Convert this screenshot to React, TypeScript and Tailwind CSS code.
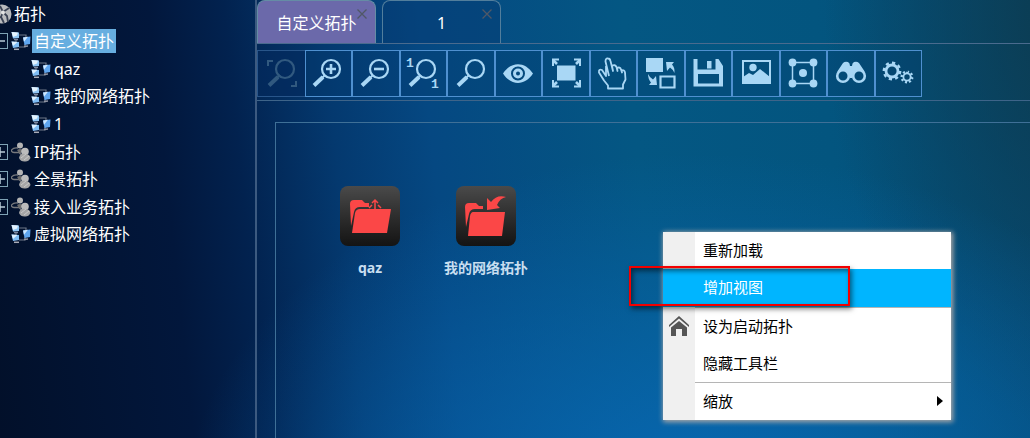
import type { ReactNode } from "react";

function NetIcon() {
  return (
    <svg viewBox="0 0 20 20" className="size-5 shrink-0" aria-hidden="true">
      <path d="M8 4h7v4M5 9v4M8 16h6v-3" fill="none" stroke="#6f7888" strokeWidth="1.200" />
      <path d="M.5 1l7.500 .5v5.500L2 7.500z" fill="#8fc6f6" />
      <path d="M.5 1l6.500 .5-1 3L2 6z" fill="#e4f3ff" />
      <path d="M3 8.500h4" stroke="#7d88a0" strokeWidth="1.500" />
      <path d="M.5 10.500l7.500 .5v5L2 17z" fill="#7fbdf5" />
      <path d="M.5 10.500l6 .4L2 15z" fill="#dff0ff" />
      <path d="M3 18.300h5" stroke="#a9acb8" strokeWidth="1.500" />
      <path d="M12 6.500l7.500-1-.5 7.500-5.500 1z" fill="#5fa6f0" />
      <path d="M12 6.500l5-.7-4 5z" fill="#cfe8ff" />
      <path d="M13 15.500l4-.5" stroke="#9296a5" strokeWidth="1.500" />
    </svg>
  );
}

function GroupIcon() {
  return (
    <svg viewBox="0 0 20 20" className="size-5 shrink-0" aria-hidden="true">
      <path d="M7 6C1 5-2 10 3 10.500h5l3 3" fill="none" stroke="#77797d" strokeWidth="1.300" />
      <circle cx="9" cy="3.500" r="3" fill="#b4b4b4" />
      <path d="M6 8q3-2 6 0l-2 3H8z" fill="#6d6d6d" />
      <circle cx="14" cy="9.500" r="3.800" fill="#bcbcbc" />
      <path d="M8 16q1-5 6-4 5 0 5.500 4-2 4-6 3.500-4 0-5.500-3.500z" fill="#a6a6a6" />
      <path d="M10 16l5-4M13 18l5-4" stroke="#c9c9c9" />
    </svg>
  );
}

function GlobeIcon() {
  return (
    <svg viewBox="0 0 20 20" className="size-5 shrink-0" aria-hidden="true">
      <circle cx="10" cy="10" r="9.500" fill="#b9bbbe" />
      <path d="M8 2l3 6 6-4M11 8l-2 5-8 1M11 8l4 4 1 6M9 13l3 6" fill="none" stroke="#3a4254" strokeWidth="1.800" />
      <circle cx="11" cy="8.500" r="2" fill="#e4e4e4" />
    </svg>
  );
}

function Expander({ open }: { open: boolean }) {
  return (
    <button
      type="button"
      aria-label={open ? "折叠" : "展开"}
      className="grid size-4 shrink-0 place-items-center border border-[#7fa3b5]"
    >
      <svg viewBox="0 0 14 14" className="size-3.5" stroke="#b9cbd8" strokeWidth="1.500" aria-hidden="true">
        <path d={open ? "M2 7h10" : "M2 7h10M7 2v10"} />
      </svg>
    </button>
  );
}

type Node = { label: string; level: number; kind: "net" | "group"; open?: boolean; selected?: boolean };

const tree: Node[] = [
  { label: "自定义拓扑", level: 1, kind: "net", open: true, selected: true },
  { label: "qaz", level: 2, kind: "net" },
  { label: "我的网络拓扑", level: 2, kind: "net" },
  { label: "1", level: 2, kind: "net" },
  { label: "IP拓扑", level: 1, kind: "group", open: false },
  { label: "全景拓扑", level: 1, kind: "group", open: false },
  { label: "接入业务拓扑", level: 1, kind: "group", open: false },
  { label: "虚拟网络拓扑", level: 1, kind: "net" },
];

function Sidebar() {
  return (
    <aside className="w-[257px] shrink-0 overflow-hidden border-r-2 border-[#3c5a80]">
      <ul className="-ml-2 grid h-62 grid-rows-9 text-base leading-6 whitespace-nowrap text-white">
        <li className="flex items-center gap-0.5">
          <GlobeIcon />
          <span>拓扑</span>
        </li>
        {tree.map((n) => (
          <li key={n.label} className={n.level === 2 ? "flex items-center pl-[39px]" : "flex items-center"}>
            {n.level === 1 && (
              <span className="mr-[3px] w-4 shrink-0">{n.open !== undefined && <Expander open={n.open} />}</span>
            )}
            {n.kind === "net" ? <NetIcon /> : <GroupIcon />}
            <span className={n.selected ? "ml-px bg-[#67aee0] px-0.5" : "ml-px px-0.5"}>{n.label}</span>
          </li>
        ))}
      </ul>
    </aside>
  );
}

function Lens({ cx = 19, hx = 2 }: { cx?: number; hx?: number }) {
  return (
    <>
      <circle cx={cx} cy="11" r="9" fill="none" stroke="currentColor" strokeWidth="2.200" />
      <path d={`M${hx} 27.500l9-8.500`} stroke="currentColor" strokeWidth="4" />
      <path d={`M${hx + 8} 20l3-3`} stroke="currentColor" strokeWidth="1.800" />
    </>
  );
}

function Gear({ cx, cy, r, w, dash }: { cx: number; cy: number; r: number; w: number; dash: string }) {
  return (
    <g fill="none" stroke="currentColor">
      <circle cx={cx} cy={cy} r={r} strokeWidth={w} />
      <circle cx={cx} cy={cy} r={r + w / 2 + 0.8} strokeWidth="2.400" pathLength="32" strokeDasharray={dash} />
    </g>
  );
}

const digit = "font-['Liberation_Mono'] text-[13px] font-bold";

const tools: { name: string; art: ReactNode; off?: boolean }[] = [
  {
    name: "框选放大",
    off: true,
    art: (
      <>
        <Lens cx={20} hx={4} />
        <path d="M3 8V3h5M31 23v5h-5" fill="none" stroke="currentColor" strokeWidth="2" />
      </>
    ),
  },
  {
    name: "放大",
    art: (
      <>
        <Lens />
        <path d="M14 11h10M19 6v10" stroke="currentColor" strokeWidth="2.600" />
      </>
    ),
  },
  {
    name: "缩小",
    art: (
      <>
        <Lens />
        <path d="M14 11h10" stroke="currentColor" strokeWidth="2.600" />
      </>
    ),
  },
  {
    name: "原始大小",
    art: (
      <>
        <Lens hx={3} />
        <text x="-1" y="9" fill="currentColor" className={digit}>1</text>
        <text x="24" y="30" fill="currentColor" className={digit}>1</text>
      </>
    ),
  },
  { name: "查找", art: <Lens cx={20} hx={3} /> },
  {
    name: "预览",
    art: (
      <>
        <path
          fillRule="evenodd"
          fill="currentColor"
          d="M1 15.500C9 3 23 3 31 15.500 23 28 9 28 1 15.500zM16 8.500a7 7 0 1 0 0 14 7 7 0 0 0 0-14z"
        />
        <circle cx="16" cy="15.500" r="3.500" fill="none" stroke="currentColor" strokeWidth="3" />
      </>
    ),
  },
  {
    name: "全屏",
    art: (
      <>
        <path d="M7 7.500h18.500v15H7z" fill="currentColor" />
        <g fill="none" stroke="currentColor">
          <path d="M3 8V1.500h6M24 1.500h6V8M3 22v6.500h6M30 22v6.500h-6" strokeWidth="2" />
          <path d="M3 2l4 4M30 2l-4 4M3 28l4-4M30 28l-4-4" strokeWidth="2.600" />
        </g>
      </>
    ),
  },
  {
    name: "平移",
    art: (
      <path
        d="M12 18L8.500 3.500Q8.500 0 11 .500q2 0 2.500 2.500l2.500 10-1-5q3-2 4.500 1l1 4-.5-3q3-1.500 4 1.500l1 3-.5-2q3-1 3.500 2l.5 7-2.500 5v4H11v-3l-4-5-5-8q-.5-4 3-2.500l4 6V8"
        fill="none"
        stroke="currentColor"
        strokeWidth="1.800"
        strokeLinejoin="round"
      />
    ),
  },
  {
    name: "切换",
    art: (
      <>
        <path d="M1 0h17v14H1z" fill="currentColor" />
        <path d="M15.500 18.500h14v11h-14z" fill="none" stroke="currentColor" strokeWidth="2.200" />
        <path d="M21 4h8l-2 2.500q3 3 2.500 8.500-2-4-4.500-5.500L22 13z" fill="currentColor" />
        <path d="M12 27H4l2-2.500Q3 21 3 16q2 4 5 5.500l3-3.500z" fill="currentColor" />
      </>
    ),
  },
  {
    name: "保存",
    art: (
      <path
        fillRule="evenodd"
        fill="currentColor"
        d="M1.500 1H5.500V11.500h18V1h3l4.500 7V28.500H1.500zM6 16v9.500h21V16zM15 3h4.500v7.500H15z"
      />
    ),
  },
  {
    name: "背景图片",
    art: (
      <>
        <path d="M3 3h27v22H3z" fill="none" stroke="currentColor" strokeWidth="2" />
        <circle cx="13" cy="9.500" r="3.700" fill="currentColor" />
        <path d="M3 19l6-4 4 2 7-6 10 8v6H3z" fill="currentColor" />
      </>
    ),
  },
  {
    name: "布局",
    art: (
      <>
        <path d="M5.500 4.500h21v21h-21z" fill="none" stroke="currentColor" strokeWidth="1.500" />
        <g fill="currentColor">
          <circle cx="5.500" cy="4.500" r="3.900" />
          <circle cx="26.500" cy="4.500" r="3.900" />
          <circle cx="5.500" cy="25.500" r="3.900" />
          <circle cx="26.500" cy="25.500" r="3.900" />
          <circle cx="16" cy="15" r="4" />
        </g>
      </>
    ),
  },
  {
    name: "搜索",
    art: (
      <>
        <g fill="none" stroke="currentColor" strokeWidth="2.600">
          <circle cx="8" cy="18" r="5.800" />
          <circle cx="24" cy="18" r="5.800" />
        </g>
        <path
          d="M2 14L8 5q2-2 5-1 2 1 2 4h2q0-3 2-4 3-1 5 1l6 9q-7-5-12 2l-.5 4h-3L14 16Q9 9 2 14z"
          fill="currentColor"
        />
      </>
    ),
  },
  {
    name: "设置",
    art: (
      <>
        <Gear cx={10} cy={13} r={6} w={2.8} dash="2 2" />
        <Gear cx={25} cy={19} r={3.6} w={1.8} dash="2 2" />
      </>
    ),
  },
];

function Toolbar() {
  return (
    <div className="border-b border-[#3e6489] pt-1.5 pb-[3px]">
      <div className="grid w-[665px] grid-cols-14">
        {tools.map((t) => (
          <button
            key={t.name}
            type="button"
            aria-label={t.name}
            disabled={t.off}
            className={
              t.off
                ? "grid h-[47px] place-items-center border border-r-0 border-[#28558a] bg-[#032a5e]/60 text-[#31597f]"
                : "grid h-[47px] place-items-center border border-[#4f90d0] bg-[#033a70]/30 text-[#a9d7f5]"
            }
          >
            <svg viewBox="0 0 32 32" className="size-8 overflow-visible" aria-hidden="true">
              {t.art}
            </svg>
          </button>
        ))}
      </div>
    </div>
  );
}

function Tab({ label, active }: { label: string; active?: boolean }) {
  return (
    <div
      className={
        active
          ? "relative w-[119px] rounded-t-lg border border-b-0 border-[#658ca5] bg-[#6b69aa]"
          : "relative w-[119px] rounded-t-lg border border-b-0 border-[#527e9c] bg-[#043a70]/40"
      }
    >
      <button type="button" className="h-full w-full pt-0.5 text-base leading-6 text-white">
        {label}
      </button>
      <button type="button" aria-label={"关闭" + label} className="absolute top-2 right-2">
        <svg viewBox="0 0 10 10" className="size-2.5" stroke="#505866" strokeWidth="1.300" aria-hidden="true">
          <path d="M.5.5l9 9M9.500.5l-9 9" />
        </svg>
      </button>
    </div>
  );
}

function FolderNode({ label, children }: { label: string; children: ReactNode }) {
  return (
    <button type="button" className="flex w-[116px] flex-col items-center gap-3">
      <span className="size-[60px] rounded-lg bg-linear-to-b from-[#4a4a4a] to-[#141414]">
        <svg viewBox="0 0 60 60" className="size-full" fill="#fb4747" aria-hidden="true">
          {children}
        </svg>
      </span>
      <span className="text-sm leading-5 font-bold whitespace-nowrap text-[#c8def0]">{label}</span>
    </button>
  );
}

function MenuItem({ label, icon, active, arrow }: { label: string; icon?: ReactNode; active?: boolean; arrow?: boolean }) {
  return (
    <button
      type="button"
      role="menuitem"
      className={
        active
          ? "flex h-[38px] w-full items-center bg-[#00b5ff] pb-0.5 text-white"
          : "flex h-[37px] w-full items-center pb-0.5 text-black"
      }
    >
      <span className="flex w-8 justify-center">{icon}</span>
      <span className="flex-1 pl-2 text-left">{label}</span>
      {arrow && (
        <svg viewBox="0 0 6 10" className="mr-2 h-2.5 w-1.5" aria-hidden="true">
          <path d="M0 0l6 5-6 5z" />
        </svg>
      )}
    </button>
  );
}

function ContextMenu() {
  return (
    <div
      role="menu"
      className="absolute top-[109px] left-[387px] w-72 bg-linear-to-r from-[#f0f0f0] from-[32px] to-white to-[32px] text-[15px] leading-5 shadow-[1px_1px_5px_1px_#b0aaa8]"
    >
      <MenuItem label="重新加载" />
      <MenuItem label="增加视图" active />
      <div className="ml-8 h-px bg-[#b5b5b5]" />
      <MenuItem
        label="设为启动拓扑"
        icon={
          <svg viewBox="0 0 20 20" className="size-5" fill="#555" aria-hidden="true">
            <path d="M0 9L10 0l10 9v2L10 2.500 0 11z" />
            <path d="M2 11.500L10 5l8 6.500V20h-5v-7H7v7H2z" />
          </svg>
        }
      />
      <MenuItem label="隐藏工具栏" />
      <div className="ml-8 h-px bg-[#b5b5b5]" />
      <MenuItem label="缩放" arrow />
      <div className="pointer-events-none absolute top-[34px] -left-[34px] h-10 w-[221px] border-2 border-[#f30000] shadow-[2px_3px_5px_rgba(0,0,0,0.5),inset_2px_3px_5px_rgba(0,0,0,0.5)]" />
    </div>
  );
}

export default function App() {
  return (
    <div className="flex min-h-screen overflow-hidden bg-[radial-gradient(ellipse_50%_80%_at_68%_115%,#0868b4_0%,#0868b400_100%),radial-gradient(ellipse_26%_100%_at_106%_0%,#0d3a4c_0%,#0d3a4c00_100%),linear-gradient(84deg,#02102a_0%,#02173c_18%,#02224f_25%,#04396f_34%,#054882_43%,#045783_62%,#03557f_80%,#054b76_100%)] font-['Noto_Sans','Noto_Sans_CJK_SC',sans-serif]">
      <Sidebar />
      <main className="flex min-w-0 flex-1 flex-col">
        <div className="flex h-11 gap-1.5 border-b border-[#4a6b8e]">
          <Tab label="自定义拓扑" active />
          <Tab label="1" />
        </div>
        <Toolbar />
        <section className="relative mt-[21px] ml-[18px] flex flex-1 border-t border-l border-[#3f7097] pt-[63px] pl-9">
          <FolderNode label="qaz">
            <path d="M10 18q0-4 4-4h8l3 3h4v4H20q-5 0-6 5l-3 14z" />
            <path d="M20 23h31l-4 24H12l3-20q1-4 5-4z" />
            <path d="M35 14v9M32 17l3-3 3 3M29 22l3-3M41 22l-3-3" fill="none" stroke="#fb4747" strokeWidth="1.500" />
          </FolderNode>
          <FolderNode label="我的网络拓扑">
            <path d="M9 21q0-4 4-4h7l3 3h4v3h-8q-5 0-6 5l-3 13z" />
            <path d="M17 26h32l-3 24H12l2-20q1-4 3-4z" />
            <path d="M31 12l4 4q6-8 15-5-6 1-9 8l3 3-13 2z" />
          </FolderNode>
          <ContextMenu />
        </section>
      </main>
    </div>
  );
}
